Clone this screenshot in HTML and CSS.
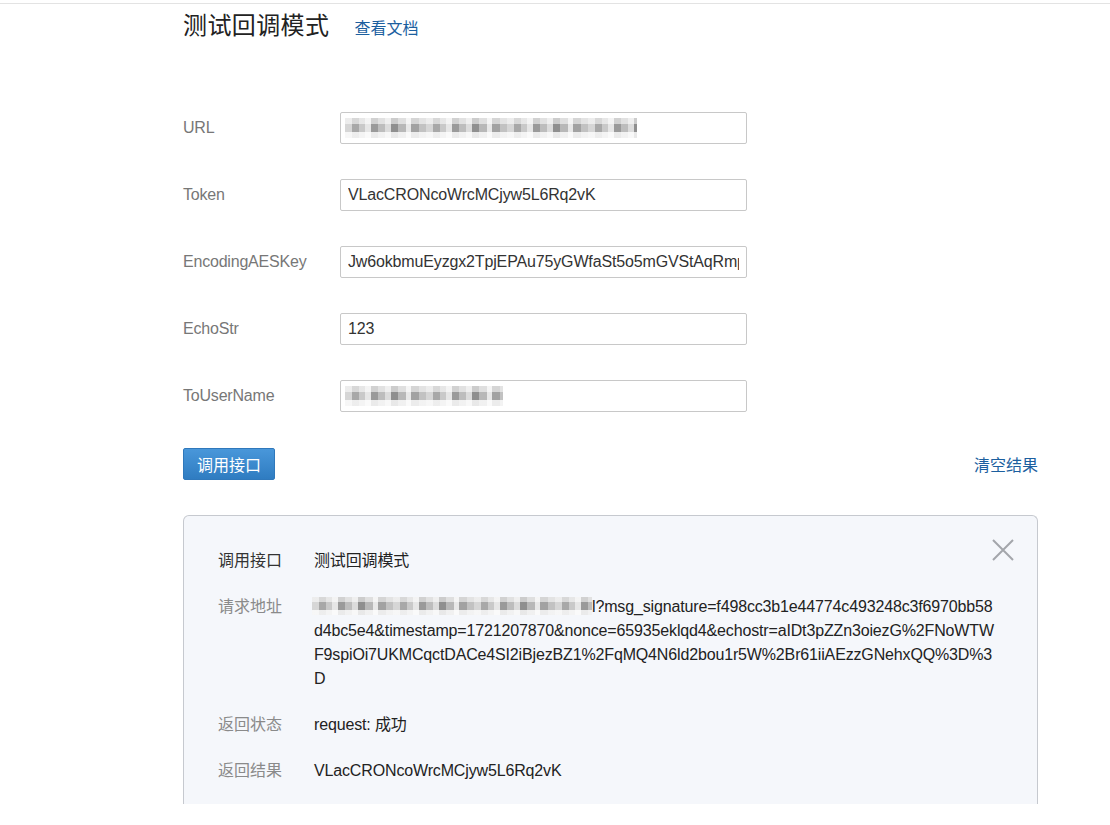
FILE: index.html
```html
<!DOCTYPE html>
<html lang="zh-CN">
<head>
<meta charset="utf-8">
<title>测试回调模式</title>
<link rel="stylesheet" href="styles.css">
</head>
<body>
<div class="topbar"></div>
<div class="page">
  <div class="header">
    <h1 class="title">测试回调模式</h1>
    <a class="doc-link" href="#">查看文档</a>
  </div>

  <div class="form">
    <div class="row">
      <div class="label">URL</div>
      <div class="field"><span class="pix pix-url"></span></div>
    </div>
    <div class="row">
      <div class="label">Token</div>
      <input class="field" type="text" value="VLacCRONcoWrcMCjyw5L6Rq2vK">
    </div>
    <div class="row">
      <div class="label">EncodingAESKey</div>
      <input class="field" type="text" value="Jw6okbmuEyzgx2TpjEPAu75yGWfaSt5o5mGVStAqRmpY">
    </div>
    <div class="row">
      <div class="label">EchoStr</div>
      <input class="field" type="text" value="123">
    </div>
    <div class="row">
      <div class="label">ToUserName</div>
      <div class="field"><span class="pix pix-user"></span></div>
    </div>
  </div>

  <div class="actions">
    <button class="btn" type="button">调用接口</button>
    <a class="clear-link" href="#">清空结果</a>
  </div>

  <div class="panel">
    <span class="close">
      <svg width="22" height="22" viewBox="0 0 22 22"><path d="M1 1 L21 21 M21 1 L1 21" stroke="#a3a6ab" stroke-width="2" fill="none"/></svg>
    </span>
    <div class="info-row">
      <div class="info-label dark">调用接口</div>
      <div class="info-value">测试回调模式</div>
    </div>
    <div class="info-row">
      <div class="info-label">请求地址</div>
      <div class="info-value">
        <div class="line"><span class="pix pix-req"></span>l?msg_signature=f498cc3b1e44774c493248c3f6970bb58</div>
        <div class="line">d4bc5e4&amp;timestamp=1721207870&amp;nonce=65935eklqd4&amp;echostr=aIDt3pZZn3oiezG%2FNoWTW</div>
        <div class="line">F9spiOi7UKMCqctDACe4SI2iBjezBZ1%2FqMQ4N6ld2bou1r5W%2Br61iiAEzzGNehxQQ%3D%3</div>
        <div class="line">D</div>
      </div>
    </div>
    <div class="info-row">
      <div class="info-label">返回状态</div>
      <div class="info-value">request: 成功</div>
    </div>
    <div class="info-row">
      <div class="info-label">返回结果</div>
      <div class="info-value">VLacCRONcoWrcMCjyw5L6Rq2vK</div>
    </div>
  </div>
</div>
</body>
</html>
```

FILE: styles.css
```css
body {
  margin: 0;
  background: #fff;
  color: #333;
  font-family: "Liberation Sans", Arial, "Noto Sans CJK SC", sans-serif;
}

.topbar {
  height: 3px;
  border-bottom: 1px solid #e3e3e3;
}

.page {
  margin-left: 183px;
  width: 855px;
}

.header {
  display: flex;
  align-items: baseline;
  gap: 25px;
  padding-top: 6px;
  height: 32px;
}

.title {
  margin: 0;
  font-size: 24px;
  line-height: 32px;
  font-weight: normal;
  letter-spacing: 0.4px;
  color: #222;
}

.doc-link,
.clear-link {
  font-size: 16px;
  color: #1c5f9f;
  text-decoration: none;
}

.form {
  margin-top: 70px;
  display: flex;
  flex-direction: column;
  gap: 35px;
}

.row {
  display: flex;
  align-items: center;
}

.label {
  width: 157px;
  flex: none;
  font-size: 16px;
  color: #777;
  letter-spacing: -0.2px;
}

.field {
  width: 407px;
  height: 32px;
  box-sizing: border-box;
  margin: 0;
  border: 1px solid #c8c8c8;
  border-radius: 2px;
  padding: 0 7px;
  background: #fff;
  color: #333;
  font-family: "Liberation Sans", Arial, "Noto Sans CJK SC", sans-serif;
  font-size: 16px;
  letter-spacing: -0.15px;
  display: flex;
  align-items: center;
  outline: none;
}

.pix {
  display: inline-block;
  flex: none;
  vertical-align: middle;
  background:
    linear-gradient(180deg, rgba(255,255,255,.55) 0 30%, rgba(255,255,255,0) 30% 72%, rgba(255,255,255,.8) 72%),
    repeating-linear-gradient(90deg, #d6d6d6 0 7px, #a8a8a8 7px 14px, #c9c9c9 14px 20px, #e6e6e6 20px 26px, #9a9a9a 26px 33px, #bdbdbd 33px 40px, #dcdcdc 40px 46px, #8f8f8f 46px 53px, #b8b8b8 53px 61px, #e8e8e8 61px 66px, #a2a2a2 66px 74px, #c2c2c2 74px 81px);
}

.pix-url {
  width: 292px;
  height: 20px;
  margin-left: -3px;
}

.pix-user {
  width: 158px;
  height: 20px;
  margin-left: -3px;
}

.pix-req {
  width: 280px;
  height: 18px;
  margin-left: -2px;
  margin-top: -3px;
}

.actions {
  margin-top: 36px;
  display: flex;
  justify-content: space-between;
  align-items: center;
}

.btn {
  width: 92px;
  height: 32px;
  padding: 0;
  border: 1px solid #2f78bb;
  border-radius: 2px;
  background: linear-gradient(180deg, #4997da, #2f7cc1);
  color: #fff;
  font-family: "Liberation Sans", Arial, "Noto Sans CJK SC", sans-serif;
  font-size: 16px;
}

.panel {
  position: relative;
  margin-top: 35px;
  background: #f5f7fb;
  border: 1px solid #c6c9cf;
  border-bottom: none;
  border-radius: 6px 6px 0 0;
  padding: 33px 14px 21px 34px;
}

.close {
  position: absolute;
  top: 23px;
  right: 23px;
  width: 22px;
  height: 22px;
}

.close svg {
  display: block;
}

.info-row {
  display: flex;
  font-size: 16px;
  line-height: 24px;
}

.info-row + .info-row {
  margin-top: 22px;
}

.info-label {
  width: 96px;
  flex: none;
  color: #8a8a8a;
}

.info-label.dark {
  color: #333;
}

.info-value {
  color: #222;
  letter-spacing: -0.15px;
}

.line {
  white-space: nowrap;
}
```
